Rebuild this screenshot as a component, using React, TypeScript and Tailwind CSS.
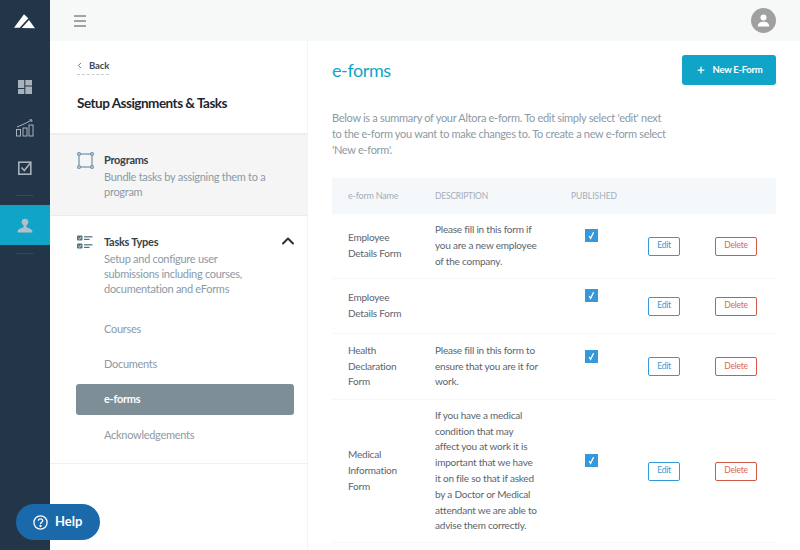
import React from 'react'
import { ChevronLeft, ChevronUp, Plus } from 'lucide-react'

const font = { fontFamily: 'Lato, "Noto Sans", sans-serif' }

const Logo = () => (
  <svg width="22" height="15" viewBox="0 0 22 15" fill="white">
    <path d="M0 13.7 L10 0.3 L14.3 4.3 L5.7 13.7 Z" />
    <path d="M7.7 14 L15 6 L21 14.3 Z" />
  </svg>
)

const DashIcon = () => (
  <svg width="14" height="14" viewBox="0 0 14 14" fill="#a9b1b9">
    <rect x="0" y="0" width="6.3" height="8" />
    <rect x="7.3" y="0" width="6.7" height="5.5" />
    <rect x="0" y="9" width="6.3" height="5" />
    <rect x="7.3" y="6.5" width="6.7" height="7.5" />
  </svg>
)

const ChartIcon = () => (
  <svg width="18" height="18" viewBox="0 0 18 18" fill="none" stroke="#a9b1b9" strokeWidth="1">
    <rect x="0.5" y="10.5" width="4" height="6.5" />
    <rect x="7" y="9" width="4" height="8" />
    <rect x="13" y="6" width="4" height="11" />
    <path d="M1 8 L8 5 L15 1.5" />
    <path d="M13.5 0.8 L16 0.8 L15.6 3" />
  </svg>
)

const TaskIcon = () => (
  <svg width="14" height="14" viewBox="0 0 14 14" fill="none" stroke="#a9b1b9" strokeWidth="1.6">
    <rect x="0.8" y="1.2" width="12" height="12" />
    <path d="M3.5 6.5 L6.3 9.5 L12.8 1.5" />
  </svg>
)

const UserIcon = () => (
  <svg width="16" height="15" viewBox="0 0 16 15" fill="#b3c0c8">
    <circle cx="8" cy="4" r="3.2" />
    <rect x="4.5" y="3.6" width="7" height="1" />
    <path d="M6.5 7 L9.5 7 L9.5 9.5 C12 10 15.5 11 15.5 14.5 L0.5 14.5 C0.5 11 4 10 6.5 9.5 Z" />
  </svg>
)

const ProgramIcon = () => (
  <svg width="17" height="17" viewBox="0 0 17 17" fill="none" stroke="#6f8fa6" strokeWidth="1.2">
    <rect x="2" y="2" width="13" height="13" />
    <circle cx="2" cy="2" r="1.4" fill="#f5f5f5" />
    <circle cx="15" cy="2" r="1.4" fill="#f5f5f5" />
    <circle cx="2" cy="15" r="1.4" fill="#f5f5f5" />
    <circle cx="15" cy="15" r="1.4" fill="#f5f5f5" />
  </svg>
)

const TaskListIcon = () => (
  <svg width="16" height="14" viewBox="0 0 16 14">
    <rect x="0" y="0.5" width="5.5" height="5" rx="1" fill="#52707f" />
    <rect x="0" y="8.5" width="5.5" height="5" rx="1" fill="#52707f" />
    <path d="M1.3 3 L2.6 4.2 L4.3 2" stroke="white" strokeWidth="0.8" fill="none" />
    <path d="M1.3 11 L2.6 12.2 L4.3 10" stroke="white" strokeWidth="0.8" fill="none" />
    <rect x="7" y="1.2" width="8.5" height="1.2" fill="#52707f" />
    <rect x="7" y="3.8" width="5.5" height="1.2" fill="#52707f" />
    <rect x="7" y="9.2" width="8.5" height="1.2" fill="#52707f" />
    <rect x="7" y="11.8" width="5.5" height="1.2" fill="#52707f" />
  </svg>
)

const Check = () => (
  <div className="w-[13px] h-[13px] bg-[#3498db] flex items-center justify-center">
    <svg width="9" height="9" viewBox="0 0 9 9" fill="none" stroke="white" strokeWidth="1.3">
      <path d="M2.2 5 L3.6 7.4 L6.6 1.2" />
    </svg>
  </div>
)

const rows = [
  { name: ['Employee', 'Details Form'], desc: ['Please fill in this form if', 'you are a new employee', 'of the company.'], h: 'h-[65px]' },
  { name: ['Employee', 'Details Form'], desc: [], h: 'h-[55px]' },
  { name: ['Health', 'Declaration', 'Form'], desc: ['Please fill in this form to', 'ensure that you are it for', 'work.'], h: 'h-[66px]' },
  {
    name: ['Medical', 'Information', 'Form'],
    desc: [
      'If you have a medical',
      'condition that may',
      'affect you at work it is',
      'important that we have',
      'it on file so that if asked',
      'by a Doctor or Medical',
      'attendant we are able to',
      'advise them correctly.',
    ],
    h: 'h-[143px]',
  },
]

const App = () => {
  return (
    <div className="w-[800px] h-[550px] overflow-hidden flex relative bg-white" style={font}>
      <aside className="w-[50px] shrink-0 bg-[#233549] flex flex-col items-center">
        <div className="h-[41px] flex items-center justify-center w-full pt-[1px]">
          <Logo />
        </div>
        <div className="mt-[37px] h-[17px] flex items-center"><DashIcon /></div>
        <div className="mt-[24px] h-[18px] flex items-center"><ChartIcon /></div>
        <div className="mt-[23px] h-[16px] flex items-center"><TaskIcon /></div>
        <div className="mt-[19px] w-[18px] h-px bg-[#33465a]" />
        <div className="mt-[9px] w-full h-[40px] bg-[#10a5c8] flex items-center justify-center"><UserIcon /></div>
        <div className="mt-[8px] w-[18px] h-px bg-[#33465a]" />
      </aside>

      <div className="flex-1 flex flex-col min-w-0">
        <header className="h-[41px] shrink-0 bg-[#f7f8f8] flex items-center justify-between pl-[24px] pr-[24px]">
          <div className="w-[12px] flex flex-col gap-[3px]">
            <div className="h-[2px] bg-[#a3a3a3]" />
            <div className="h-[2px] bg-[#a3a3a3]" />
            <div className="h-[2px] bg-[#a3a3a3]" />
          </div>
          <div className="w-[25px] h-[25px] rounded-full bg-[#a0a0a0] flex items-center justify-center">
            <svg width="13" height="13" viewBox="0 0 13 13" fill="white">
              <circle cx="6.5" cy="3.5" r="3" />
              <path d="M0.8 12.5 C0.8 9 3.5 7.8 6.5 7.8 C9.5 7.8 12.2 9 12.2 12.5 Z" />
            </svg>
          </div>
        </header>

        <div className="flex-1 flex min-h-0">
          <nav className="w-[258px] shrink-0 border-r border-[#f2f3f4]">
            <div className="h-[92px] pl-[27px] pt-[11px]">
              <div className="inline-flex items-center text-[9.5px] leading-[14px] font-bold tracking-[-0.1px] text-[#3d4a52] border-b border-dashed border-[#c6cbd0] pb-[1px] w-[32px]">
                <ChevronLeft size={9} strokeWidth={2.5} className="text-[#5c6b75] mr-[5px] -ml-[2px] shrink-0" />
                <span>Back</span>
              </div>
              <h2 className="mt-[17px] text-[13.5px] leading-[20px] font-bold tracking-[-0.5px] text-[#1f2730]">Setup Assignments &amp; Tasks</h2>
            </div>

            <div className="h-[83px] bg-[#f5f5f5] border-t-2 border-[#eeeeee] border-b border-b-[#ececec] flex pl-[27px] pt-[18px]">
              <div className="w-[27px] -mt-[1px]"><ProgramIcon /></div>
              <div className="w-[175px]">
                <div className="text-[11px] leading-[14px] font-bold tracking-[-0.28px] text-[#37424a]">Programs</div>
                <div className="mt-[2px] text-[11px] leading-[15px] tracking-[-0.28px] text-[#8b9aa5]">Bundle tasks by assigning them to a program</div>
              </div>
            </div>

            <div className="h-[248px] border-b border-[#f0f0f0] pl-[27px] pt-[19px]">
              <div className="flex">
                <div className="w-[27px]"><TaskListIcon /></div>
                <div className="w-[175px]">
                  <div className="text-[11px] leading-[14px] font-bold tracking-[-0.28px] text-[#37424a]">Tasks Types</div>
                  <div className="mt-[2px] w-[165px] text-[11px] leading-[15px] tracking-[-0.28px] text-[#8b9aa5]">Setup and configure user submissions including courses, documentation and eForms</div>
                </div>
                <ChevronUp size={20} strokeWidth={2.4} className="text-[#26323a] -mt-[4px] -ml-[1px]" />
              </div>
              <div className="mt-[16px] text-[11px] tracking-[-0.28px] text-[#8b9aa5]">
                <div className="h-[35px] pl-[27px] flex items-center">Courses</div>
                <div className="h-[35px] pl-[27px] flex items-center">Documents</div>
                <div className="mt-[2px] h-[31px] w-[218px] -ml-[1px] pl-[28px] flex items-center rounded-[3px] bg-[#7e8e96] text-white font-bold">e-forms</div>
                <div className="h-[40px] pl-[27px] flex items-center">Acknowledgements</div>
              </div>
            </div>
          </nav>

          <main className="flex-1 min-w-0 pl-[24px] pr-[24px]">
            <div className="flex justify-between items-start pt-[14px]">
              <h1 className="text-[18px] leading-[30px] tracking-[-0.4px] text-[#10a5c8]">e-forms</h1>
              <button className="w-[94px] h-[30px] rounded-[3px] bg-[#10a5c8] text-white text-[9.5px] tracking-[-0.3px] font-bold flex items-center justify-center gap-[7px]">
                <Plus size={10} strokeWidth={3} />
                New E-Form
              </button>
            </div>

            <p className="mt-[25px] text-[11px] leading-[16px] tracking-[-0.3px] text-[#8b9aa5] w-[340px]">
              Below is a summary of your Altora e-form. To edit simply select 'edit' next to the e-form you want to make changes to. To create a new e-form select 'New e-form'.
            </p>

            <div className="mt-[20px]">
              <div className="h-[36px] bg-[#f5f8fb] grid grid-cols-[103px_136px_77px_67px_61px] items-center text-[#a3adb8] text-[8.5px]">
                <div className="pl-[16px] text-[9px] tracking-[-0.2px]">e-form Name</div>
                <div className="tracking-[-0.2px]">DESCRIPTION</div>
                <div>PUBLISHED</div>
                <div />
                <div />
              </div>
              {rows.map((row, i) => (
                <div key={i} className={`${row.h} border-b border-[#f6f7f8] grid grid-cols-[103px_136px_77px_67px_61px] items-center text-[#59656e] text-[10px] tracking-[-0.21px] leading-[15.8px]`}>
                  <div className="pl-[16px]">
                    {row.name.map((line) => <div key={line}>{line}</div>)}
                  </div>
                  <div className="whitespace-nowrap">
                    {row.desc.map((line) => <div key={line}>{line}</div>)}
                  </div>
                  <div className="pl-[14px] -mt-[21px]"><Check /></div>
                  <div>
                    <button className="w-[32px] h-[19px] border border-[#3498db] rounded-[2px] text-[#3498db] text-[8.5px] flex items-center justify-center">Edit</button>
                  </div>
                  <div>
                    <button className="w-[42px] h-[19px] border border-[#cf5a46] rounded-[2px] text-[#e0654a] text-[8.5px] flex items-center justify-center">Delete</button>
                  </div>
                </div>
              ))}
            </div>
          </main>
        </div>
      </div>

      <button className="absolute left-[16px] top-[504px] w-[84px] h-[36px] rounded-full bg-[#1a69ab] text-white flex items-center pl-[17px] gap-[7px] text-[13px] font-bold">
        <svg width="15" height="15" viewBox="0 0 15 15" fill="none" stroke="white" strokeWidth="1.3">
          <circle cx="7.5" cy="7.5" r="6.6" />
          <path d="M5.4 5.8 C5.4 4.4 6.4 3.8 7.5 3.8 C8.7 3.8 9.7 4.5 9.7 5.7 C9.7 7.2 7.5 7.3 7.5 9" />
          <circle cx="7.5" cy="11" r="0.5" fill="white" />
        </svg>
        Help
      </button>
    </div>
  )
}

export default App
